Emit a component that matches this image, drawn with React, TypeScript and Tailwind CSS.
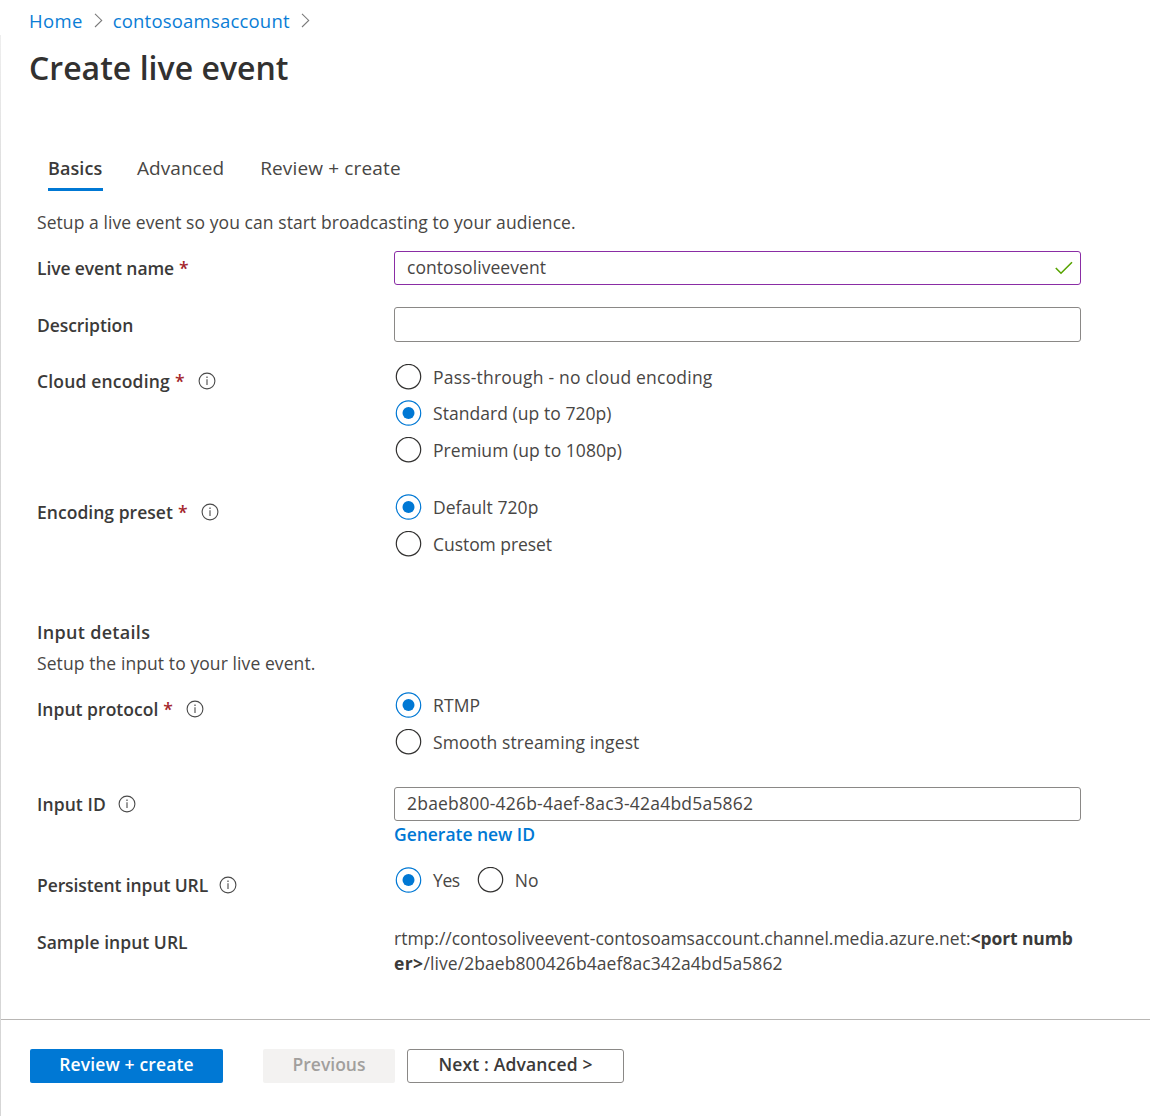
import type { ReactNode } from 'react'

function Chevron({ className = '' }: { className?: string }) {
  return (
    <svg className={className} width="9" height="15" viewBox="0 0 9 15" fill="none" stroke="#7a7a7a" strokeWidth="1.1">
      <path d="M1 0.8 L7.7 7.4 L1 14" />
    </svg>
  )
}

function Info({ className = '' }: { className?: string }) {
  return (
    <svg className={`shrink-0 ${className}`} width="18" height="18" viewBox="0 0 18 18" fill="none" stroke="#4a4a4a">
      <circle cx="9" cy="9" r="7.9" strokeWidth="1.1" />
      <path d="M9 7.3 V13" strokeWidth="1.1" />
      <path d="M9 4.6 V5.9" strokeWidth="1.2" />
    </svg>
  )
}

function Label({ text, tracking = '', required, info, className = '' }: {
  text: string
  tracking?: string
  required?: boolean
  info?: string
  className?: string
}) {
  return (
    <div className={`flex h-6 w-[357px] shrink-0 items-center font-semibold text-[#3b3a39] ${className}`}>
      <span className={tracking}>{text}</span>
      {required && <span className="ml-[5px] text-[#a4262c]">*</span>}
      {info && <Info className={info} />}
    </div>
  )
}

function Radio({ text, tracking = '', checked, className = '' }: {
  text: string
  tracking?: string
  checked?: boolean
  className?: string
}) {
  return (
    <div className={`flex h-[26px] items-center ${className}`}>
      <svg className="ml-px mr-[11px] shrink-0" width="27" height="26" viewBox="0 0 27 26" fill="none">
        <circle cx="13.5" cy={checked ? 13 : 12.6} r="12.2" stroke={checked ? '#0078d4' : '#323130'} strokeWidth="1.2" />
        {checked && <circle cx="13.5" cy="13" r="6" fill="#0078d4" />}
      </svg>
      <span className={tracking}>{text}</span>
    </div>
  )
}

function Field({ children, className }: { children?: ReactNode; className: string }) {
  return (
    <div className={`flex w-[687px] items-center justify-between rounded-[3px] border pl-[12px] pr-[7px] ${className}`}>
      {children}
    </div>
  )
}

export default function App() {
  return (
    <div className="flex h-[1116px] w-[1150px] overflow-hidden bg-white font-['Open_Sans',sans-serif] text-[17.5px] leading-6 text-[#484644]">
      <div className="mt-[35px] w-px shrink-0 bg-gradient-to-b from-[#eeeeee] via-[#d6d6d6] via-20% to-[#d6d6d6]" />
      <div className="flex grow flex-col whitespace-nowrap">
        <nav className="ml-[28px] mt-[9px] flex h-6 items-center text-[18.5px] text-[#0a7dd6]">
          <span className="tracking-[0.35px]">Home</span>
          <Chevron className="-mt-[2px] ml-[11px]" />
          <span className="ml-[10px] tracking-[0.2px]">contosoamsaccount</span>
          <Chevron className="-mt-[2px] ml-[11px]" />
        </nav>
        <h1 className="ml-[28px] mt-[13px] h-11 text-[32px] font-semibold leading-[44px] tracking-[0.02px] text-[#323130]">
          Create live event
        </h1>

        <div className="ml-[47px] mt-[66px] flex h-[35px] items-start text-[19px]">
          <div className="h-[35px] w-[55px] border-b-[3px] border-[#0078d4] text-[18px] font-semibold tracking-[0.1px] text-[#3b3a39]">Basics</div>
          <div className="ml-[34px] tracking-[0.05px]">Advanced</div>
          <div className="ml-[36px] tracking-[0.15px]">Review + create</div>
        </div>

        <main className="ml-[36px] mt-[19px]">
          <p className="tracking-[0.07px]">Setup a live event so you can start broadcasting to your audience.</p>

          <div className="mt-[17px] flex">
            <Label text="Live event name" tracking="tracking-[-0.1px]" required className="mt-[5px]" />
            <Field className="h-[34px] border-[#8a2da5]">
              <span className="-mt-0.5 tracking-[0.06px]">contosoliveevent</span>
              <svg width="18" height="14" viewBox="0 0 18 14" fill="none" stroke="#57a300" strokeWidth="1.6">
                <path d="M0.8 7 L6 12.2 L17 1.2" />
              </svg>
            </Field>
          </div>

          <div className="mt-[22px] flex">
            <Label text="Description" tracking="tracking-[-0.08px]" className="mt-[6px]" />
            <Field className="h-[35px] border-[#8a8886]" />
          </div>

          <div className="mt-[22px] flex">
            <Label text="Cloud encoding" tracking="tracking-[0.18px]" required info="ml-[14px]" className="mt-[5px]" />
            <div>
              <Radio text="Pass-through - no cloud encoding" tracking="tracking-[0.21px]" />
              <Radio text="Standard (up to 720p)" tracking="tracking-[0.05px]" checked className="mt-[10px]" />
              <Radio text="Premium (up to 1080p)" tracking="tracking-[0.05px]" className="mt-[11px]" />
            </div>
          </div>

          <div className="mt-[31px] flex">
            <Label text="Encoding preset" tracking="tracking-[0.03px]" required info="ml-[13px]" className="mt-[6px]" />
            <div>
              <Radio text="Default 720p" tracking="tracking-[0.05px]" checked />
              <Radio text="Custom preset" tracking="tracking-[-0.05px]" className="mt-[11px]" />
            </div>
          </div>

          <h2 className="mt-[63px] text-[18px] font-semibold leading-6 tracking-[0.3px] text-[#3b3a39]">Input details</h2>
          <p className="mt-[7px] tracking-[0.09px]">Setup the input to your live event.</p>

          <div className="mt-[17px] flex">
            <Label text="Input protocol" tracking="tracking-[0.03px]" required info="ml-[13px]" className="mt-[5px]" />
            <div>
              <Radio text="RTMP" tracking="tracking-[0.1px]" checked />
              <Radio text="Smooth streaming ingest" tracking="tracking-[0.1px]" className="mt-[11px]" />
            </div>
          </div>

          <div className="mt-[32px] flex">
            <Label text="Input ID" tracking="tracking-[0.1px]" info="ml-[12px]" className="mt-[5px]" />
            <div>
              <Field className="h-[34px] border-[#8a8886]">
                <span className="-mt-0.5 tracking-[0.21px]">2baeb800-426b-4aef-8ac3-42a4bd5a5862</span>
              </Field>
              <div className="mt-px font-semibold tracking-[-0.03px] text-[#0078d4]">Generate new ID</div>
            </div>
          </div>

          <div className="mt-[21px] flex">
            <Label text="Persistent input URL" tracking="tracking-[-0.1px]" info="ml-[11px]" className="mt-[6px]" />
            <Radio text="Yes" tracking="tracking-[-0.4px]" checked />
            <Radio text="No" className="ml-[16px]" />
          </div>

          <div className="mt-[29px] flex">
            <Label text="Sample input URL" tracking="tracking-[0.04px]" className="mt-[4px]" />
            <div className="leading-[25px]">
              <div>
                rtmp://contosoliveevent-contosoamsaccount.channel.media.azure.net:<span className="font-bold tracking-[-0.1px] text-[#3b3a39]">&lt;port numb</span>
              </div>
              <div className="tracking-[0.07px]">
                <span className="font-bold tracking-[0.4px] text-[#3b3a39]">er&gt;</span>/live/2baeb800426b4aef8ac342a4bd5a5862
              </div>
            </div>
          </div>
        </main>

        <footer className="mt-[43px] flex border-t border-[#b8b6b4] pl-[29px] pt-[29px] font-semibold text-[#3b3a39]">
          <button className="h-[34px] w-[193px] rounded-[2px] bg-[#0078d4] pb-[4px] tracking-[0.15px] text-white">Review + create</button>
          <button className="ml-[40px] h-[34px] w-[132px] rounded-[2px] bg-[#f3f2f1] pb-[4px] text-[#a19f9d]">Previous</button>
          <button className="ml-[12px] h-[34px] w-[217px] rounded-[3px] border border-[#8a8886] pb-[4px] tracking-[0.15px]">Next : Advanced &gt;</button>
        </footer>
      </div>
    </div>
  )
}
